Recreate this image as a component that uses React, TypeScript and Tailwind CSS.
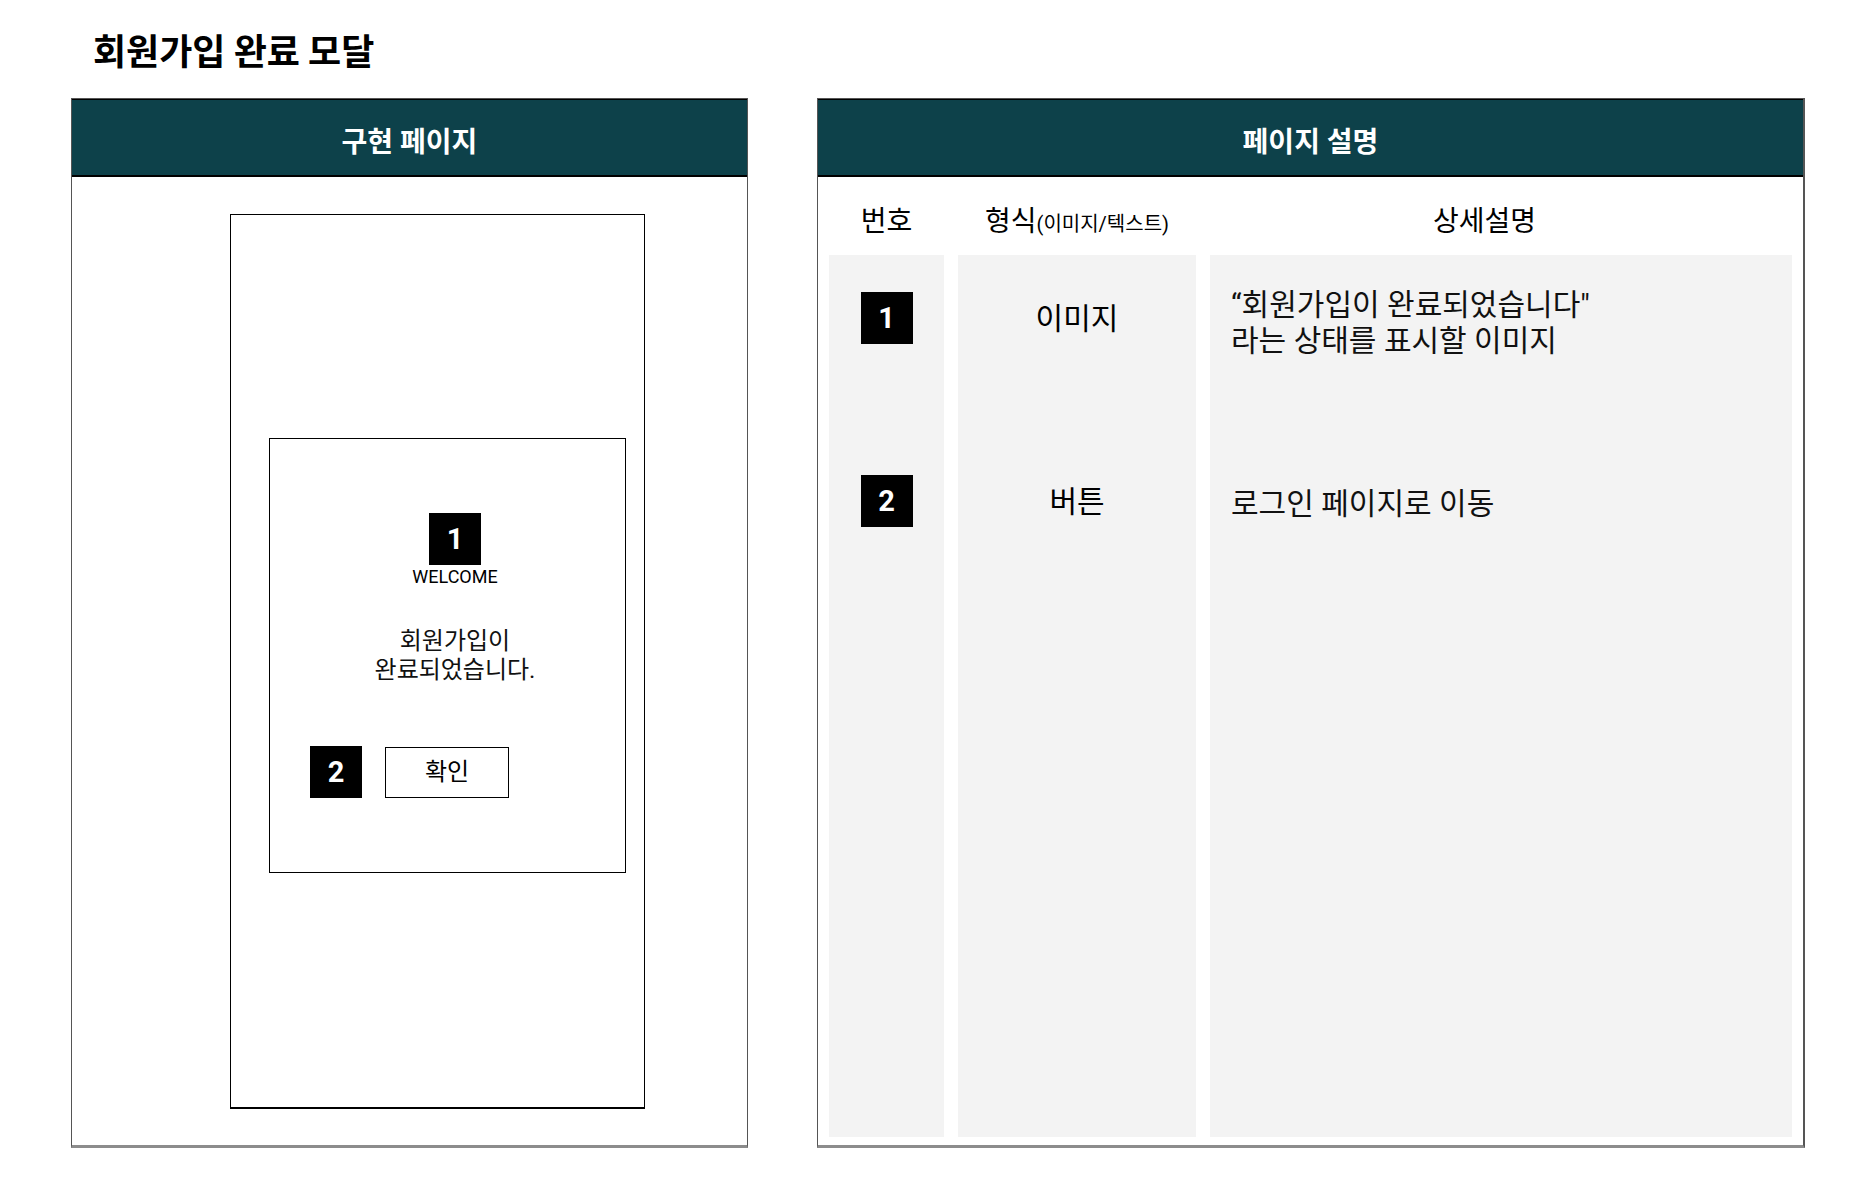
function Header({ title }: { title: string }) {
  return (
    <div className="h-[78px] shrink-0 bg-[#0d414a] border-t border-black border-b-2 border-b-black flex items-center justify-center pt-[10px] text-white text-[28px] font-bold leading-none">
      {title}
    </div>
  );
}

function Badge({ n, className = "" }: { n: string; className?: string }) {
  return (
    <div
      className={
        "w-[52px] h-[52px] bg-black text-white flex items-center justify-center text-[29px] font-bold leading-none shrink-0 " +
        className
      }
    >
      {n}
    </div>
  );
}

export default function App() {
  return (
    <div className="w-[1868px] min-h-[1181px] bg-white text-black font-['Roboto','Noto_Sans_CJK_KR',sans-serif]">
      <div className="h-[98px] flex items-center pl-[93px]">
        <h1 className="text-[36px] font-bold leading-none font-['Noto_Sans_CJK_KR',sans-serif]">
          회원가입 완료 모달
        </h1>
      </div>

      <div className="flex items-start pl-[71px] gap-[69px]">
        {/* Left panel */}
        <div className="w-[677px] h-[1050px] flex flex-col border border-[#555] border-b-[3px] border-b-[#8c8c8c]">
          <Header title="구현 페이지" />
          <div className="pt-[37px] pl-[158px]">
            <div className="w-[415px] h-[895px] border border-black border-b-2 pt-[223px] pl-[38px]">
              <div className="w-[357px] h-[435px] border border-black flex flex-col">
                <div className="flex flex-col items-center pl-[15px] pt-[74px]">
                  <Badge n="1" />
                  <div className="text-[18px] leading-[22px] mt-px">WELCOME</div>
                  <div className="mt-[39px] text-[24px] leading-[29px] text-center text-[#111]">
                    회원가입이
                    <br />
                    완료되었습니다.
                  </div>
                </div>
                <div className="flex items-center pl-[40px] mt-[61px] gap-[23px]">
                  <Badge n="2" />
                  <div className="w-[124px] h-[51px] border border-black flex items-center justify-center text-[24px]">
                    확인
                  </div>
                </div>
              </div>
            </div>
          </div>
        </div>

        {/* Right panel */}
        <div className="w-[988px] h-[1050px] flex flex-col border border-[#555] border-r-2 border-b-[3px] border-b-[#8c8c8c]">
          <Header title="페이지 설명" />
          <div className="pl-[11px] pr-[10px]">
            <div className="grid grid-cols-[115px_238px_582px] gap-x-[14px] h-[78px] pt-[12px] items-center text-[28px] leading-none">
              <div className="text-center">번호</div>
              <div className="text-center">
                형식<span className="text-[20px]">(이미지/텍스트)</span>
              </div>
              <div className="text-center pr-[33px]">상세설명</div>
            </div>
            <div className="grid grid-cols-[115px_238px_582px] gap-x-[14px] h-[882px]">
              <div className="bg-[#f3f3f3] flex flex-col">
                <div className="h-[183px] pt-[37px] flex justify-center">
                  <Badge n="1" />
                </div>
                <div className="h-[183px] pt-[37px] flex justify-center">
                  <Badge n="2" />
                </div>
              </div>
              <div className="bg-[#f3f3f3] flex flex-col text-[30px]">
                <div className="h-[183px] pt-[37px]">
                  <div className="h-[52px] flex items-center justify-center">이미지</div>
                </div>
                <div className="h-[183px] pt-[37px]">
                  <div className="h-[52px] flex items-center justify-center">버튼</div>
                </div>
              </div>
              <div className="bg-[#f3f3f3] flex flex-col text-[30px] leading-[36px] pl-[21px] text-[#111]">
                <div className="h-[183px] pt-[37px]">
                  <div className="h-[52px] flex items-center">
                    <div className="mt-[10px]">
                      “회원가입이 완료되었습니다"
                      <br />
                      라는 상태를 표시할 이미지
                    </div>
                  </div>
                </div>
                <div className="h-[183px] pt-[37px]">
                  <div className="h-[52px] flex items-center">
                    <div className="mt-[6px]">로그인 페이지로 이동</div>
                  </div>
                </div>
              </div>
            </div>
          </div>
        </div>
      </div>
    </div>
  );
}
